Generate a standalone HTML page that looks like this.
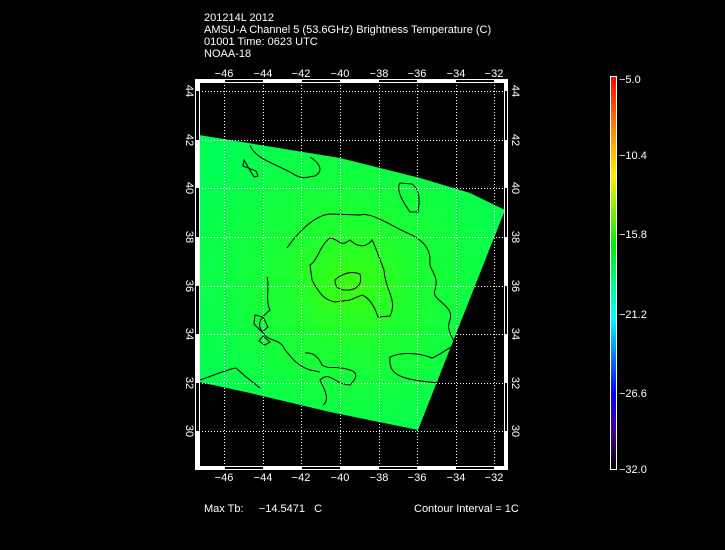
<!DOCTYPE html>
<html><head><meta charset="utf-8"><style>
html,body{margin:0;padding:0;background:#000;}
body{width:725px;height:550px;position:relative;overflow:hidden;font-family:"Liberation Sans",sans-serif;color:#fff;}
.t{position:absolute;font-size:11px;line-height:12px;white-space:pre;}
</style></head><body>
<div class="t" style="left:204px;top:12px">201214L 2012
AMSU-A Channel 5 (53.6GHz) Brightness Temperature (C)
01001 Time: 0623 UTC
NOAA-18</div>
<svg width="725" height="550" style="position:absolute;left:0;top:0">
<defs>
<radialGradient id="g" cx="350" cy="285" r="180" gradientUnits="userSpaceOnUse">
<stop offset="0" stop-color="#3cff10"/><stop offset="0.35" stop-color="#1cff30"/><stop offset="1" stop-color="#00ff55"/>
</radialGradient>
<linearGradient id="cb" x1="0" y1="0" x2="0" y2="1">
<stop offset="0" stop-color="#ff0000"/><stop offset="0.12" stop-color="#ff7700"/><stop offset="0.25" stop-color="#ffee00"/><stop offset="0.43" stop-color="#00ee00"/><stop offset="0.61" stop-color="#00ffff"/><stop offset="0.81" stop-color="#0000ff"/><stop offset="0.9" stop-color="#440099"/><stop offset="1" stop-color="#000000"/>
</linearGradient>
</defs>
<path d="M199,135 L260,145 L340,158 L420,178 L470,193 L505,210 L418,430 L330,412 L250,393 L199,382 Z" fill="url(#g)"/>
<g fill="none" stroke="#000" stroke-width="1">
<path d="M250,145 C255,160 280,165 295,175 C305,180 305,177 315,176 C325,170 318,162 310,157"/>
<path d="M244,160 L254,177 L258,176 L256,171 L243,166 Z"/>
<path d="M400,183 C395,190 405,205 410,212 L418,212 C420,200 420,190 412,184 Z"/>
<path d="M287,248 C298,232 315,215 330,214 L360,215 C370,212 385,222 405,232 C425,240 430,250 430,260 C428,270 440,275 435,290 C430,300 455,305 450,320 C445,330 455,340 455,345 C445,350 440,355 432,358 C425,355 405,350 390,357 C388,375 400,380 440,383"/>
<path d="M330,238 C320,245 318,260 310,265 L312,280 C320,295 325,300 335,302 L350,300 L362,295 C370,298 375,308 378,317 L390,316 C398,300 385,290 384,270 C380,260 375,245 372,240 C365,250 355,245 350,240 L345,243 C340,245 336,238 330,238 Z"/>
<path d="M335,280 C340,275 350,270 360,274 C362,282 360,288 350,290 C340,291 335,288 335,280 Z"/>
<path d="M267,277 C270,285 265,300 270,310 C260,318 255,325 265,335 C270,342 280,338 285,350 C290,355 295,365 310,370 L320,372"/>
<path d="M255,315 L263,317 L268,327 L262,332 L254,324 Z"/>
<path d="M263,336 L270,342 L265,345 L259,341 Z"/>
<path d="M305,353 C315,352 320,360 322,365 C330,370 335,365 350,370 C360,373 355,380 350,385 C335,385 330,370 320,380 C325,390 330,400 323,405"/>
<path d="M200,380 C215,375 225,370 236,368 L245,376 L260,388"/>
</g>
<g stroke="#fff" stroke-width="1" stroke-dasharray="1 2" fill="none">
<path d="M224.5,82V467 M263.5,82V467 M301.5,82V467 M340.5,82V467 M379.5,82V467 M417.5,82V467 M456.5,82V467 M494.5,82V467"/>
<path d="M199,91.5H505 M199,140.5H505 M199,188.5H505 M199,237.5H505 M199,286.5H505 M199,334.5H505 M199,383.5H505 M199,431.5H505"/>
</g>
<g fill="none" stroke="#fff" stroke-width="1">
<rect x="195.5" y="79.5" width="312" height="390"/>
<rect x="199.5" y="82.5" width="305" height="384"/>
</g>
<g fill="#fff">
<rect x="195" y="79" width="30" height="4"/><rect x="263" y="79" width="39" height="4"/><rect x="340" y="79" width="39" height="4"/><rect x="417" y="79" width="39" height="4"/><rect x="494" y="79" width="14" height="4"/>
<rect x="195" y="466" width="30" height="4"/><rect x="263" y="466" width="39" height="4"/><rect x="340" y="466" width="39" height="4"/><rect x="417" y="466" width="39" height="4"/><rect x="494" y="466" width="14" height="4"/>
<rect x="195" y="79" width="4" height="12"/><rect x="195" y="140" width="4" height="48"/><rect x="195" y="237" width="4" height="49"/><rect x="195" y="334" width="4" height="49"/><rect x="195" y="431" width="4" height="39"/>
<rect x="504" y="79" width="4" height="12"/><rect x="504" y="140" width="4" height="48"/><rect x="504" y="237" width="4" height="49"/><rect x="504" y="334" width="4" height="49"/><rect x="504" y="431" width="4" height="39"/>
</g>
<g fill="#fff" font-family="Liberation Sans" font-size="11" text-anchor="middle">
<text x="224" y="77">−46</text><text x="263" y="77">−44</text><text x="301" y="77">−42</text><text x="340" y="77">−40</text><text x="379" y="77">−38</text><text x="417" y="77">−36</text><text x="456" y="77">−34</text><text x="494" y="77">−32</text>
<text x="224" y="481">−46</text><text x="263" y="481">−44</text><text x="301" y="481">−42</text><text x="340" y="481">−40</text><text x="379" y="481">−38</text><text x="417" y="481">−36</text><text x="456" y="481">−34</text><text x="494" y="481">−32</text>
<g transform="translate(512,0)"><text transform="translate(0,91) rotate(90)">44</text><text transform="translate(0,140) rotate(90)">42</text><text transform="translate(0,188) rotate(90)">40</text><text transform="translate(0,237) rotate(90)">38</text><text transform="translate(0,286) rotate(90)">36</text><text transform="translate(0,334) rotate(90)">34</text><text transform="translate(0,383) rotate(90)">32</text><text transform="translate(0,431) rotate(90)">30</text></g>
<g transform="translate(186,0)"><text transform="translate(0,91) rotate(90)">44</text><text transform="translate(0,140) rotate(90)">42</text><text transform="translate(0,188) rotate(90)">40</text><text transform="translate(0,237) rotate(90)">38</text><text transform="translate(0,286) rotate(90)">36</text><text transform="translate(0,334) rotate(90)">34</text><text transform="translate(0,383) rotate(90)">32</text><text transform="translate(0,431) rotate(90)">30</text></g>
</g>
<rect x="610.5" y="76.5" width="6" height="393" fill="url(#cb)" stroke="#fff"/>
<g fill="#fff" font-family="Liberation Sans" font-size="11">
<text x="619" y="83">−5.0</text><text x="619" y="159">−10.4</text><text x="619" y="238">−15.8</text><text x="619" y="318">−21.2</text><text x="619" y="397">−26.6</text><text x="619" y="473">−32.0</text>
</g>
</svg>
<div class="t" style="left:204px;top:503px">Max Tb:     −14.5471   C</div>
<div class="t" style="left:414px;top:503px">Contour Interval = 1C</div>
</body></html>
